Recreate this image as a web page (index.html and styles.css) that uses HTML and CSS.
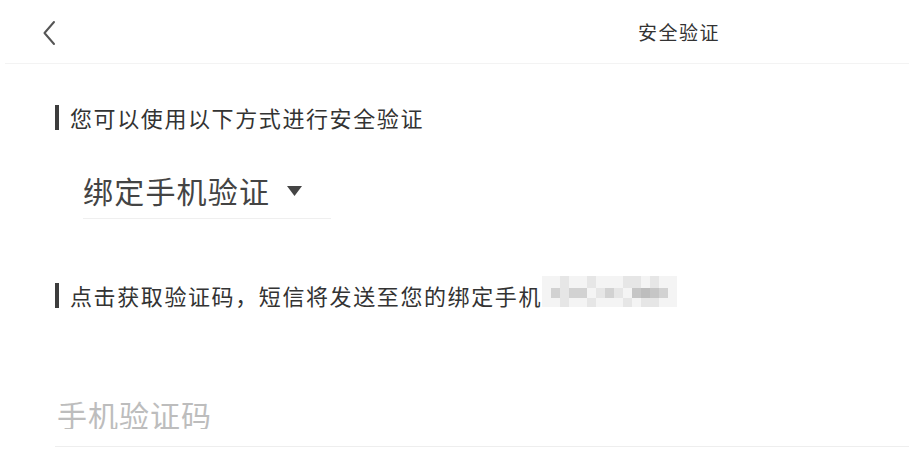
FILE: index.html
```html
<!DOCTYPE html>
<html lang="zh-CN">
<head>
<meta charset="utf-8">
<title>安全验证</title>
<link rel="stylesheet" href="styles.css">
</head>
<body>
<header class="nav">
  <svg class="back" width="14" height="26" viewBox="0 0 14 26" aria-hidden="true">
    <path d="M12 2 L2.5 13 L12 24" fill="none" stroke="#555" stroke-width="2" stroke-linecap="round" stroke-linejoin="round"/>
  </svg>
  <h1 class="title">安全验证</h1>
</header>
<main class="content">
  <p class="label label-first">您可以使用以下方式进行安全验证</p>
  <div class="select">
    <span class="select-text">绑定手机验证</span>
    <svg class="caret" width="15" height="10" viewBox="0 0 15 10" aria-hidden="true">
      <path d="M0 0 H15 L7.5 10 Z" fill="#444"/>
    </svg>
  </div>
  <p class="label label-second">点击获取验证码，短信将发送至您的绑定手机<span class="mask" aria-hidden="true"><i class="m1"></i><i class="m1"></i><i class="m2"></i><i class="m1"></i><i class="m1"></i><i class="m2"></i><i class="m1"></i><i class="m1"></i><i class="m1"></i><i class="m2"></i><i class="m2"></i><i class="m1"></i><i class="m2"></i><i class="m1"></i><i class="m1"></i><i class="m1"></i><i class="m3"></i><i class="m2"></i><i class="m3"></i><i class="m3"></i><i class="m1"></i><i class="m2"></i><i class="m3"></i><i class="m2"></i><i class="m1"></i><i class="m4"></i><i class="m5"></i><i class="m4"></i><i class="m3"></i><i class="m1"></i><i class="m1"></i><i class="m1"></i><i class="m2"></i><i class="m1"></i><i class="m1"></i><i class="m2"></i><i class="m1"></i><i class="m1"></i><i class="m1"></i><i class="m2"></i><i class="m1"></i><i class="m2"></i><i class="m2"></i><i class="m1"></i><i class="m1"></i></span></p>
  <div class="field">
    <input class="code-input" type="text" placeholder="手机验证码">
  </div>
</main>
</body>
</html>
```
FILE: styles.css
```css
* { box-sizing: border-box; }
html, body { margin: 0; padding: 0; background: #fff; }
body {
  font-family: "Noto Sans CJK SC", "Noto Sans", sans-serif;
  color: #333;
  width: 909px;
  height: 463px;
  overflow: hidden;
}
.nav {
  height: 64px;
  margin-left: 5px;
  padding-left: 37px;
  padding-right: 189px;
  display: flex;
  align-items: center;
  justify-content: space-between;
  border-bottom: 1px solid #f3f3f3;
}
.back { display: block; margin-top: 2px; }
.title {
  margin: 0;
  font-size: 19px;
  font-weight: 400;
  letter-spacing: 1.5px;
  color: #333;
}
.content { padding-left: 55px; }
.label {
  margin: 0;
  border-left: 4px solid #3d3d3d;
  padding-left: 11px;
  font-size: 22px;
  line-height: 25px;
  letter-spacing: 1.6px;
  color: #333;
  display: flex;
  align-items: center;
  white-space: nowrap;
}
.label-first { margin-top: 41px; }
.label-second { margin-top: 64px; }
.select {
  margin: 45px 0 0 28px;
  width: 248px;
  padding-bottom: 13px;
  border-bottom: 1px solid #efefef;
  display: flex;
  align-items: center;
  gap: 17px;
}
.select-text {
  font-size: 30px;
  line-height: 30px;
  letter-spacing: 1.2px;
  color: #444;
}
.caret { display: block; margin-top: 2px; }
.mask {
  display: grid;
  grid-template-columns: repeat(15, 9px);
  grid-template-rows: 12px 10px 9px;
  margin-top: -9px;
}
.mask i { display: block; }
.m1 { background: #f4f4f4; }
.m2 { background: #e6e6e6; }
.m3 { background: #d2d2d2; }
.m4 { background: #c6c6c6; }
.m5 { background: #bdbdbd; }
.field {
  margin-top: 91px;
  padding-bottom: 17px;
  border-bottom: 1px solid #eeeeee;
}
.code-input {
  display: block;
  width: 100%;
  border: 0;
  outline: 0;
  padding: 0 0 0 2px;
  background: transparent;
  font-family: inherit;
  font-size: 30px;
  line-height: 30px;
  height: 30px;
  letter-spacing: 1px;
  color: #333;
}
.code-input::placeholder { color: #bdbdbd; }
```
